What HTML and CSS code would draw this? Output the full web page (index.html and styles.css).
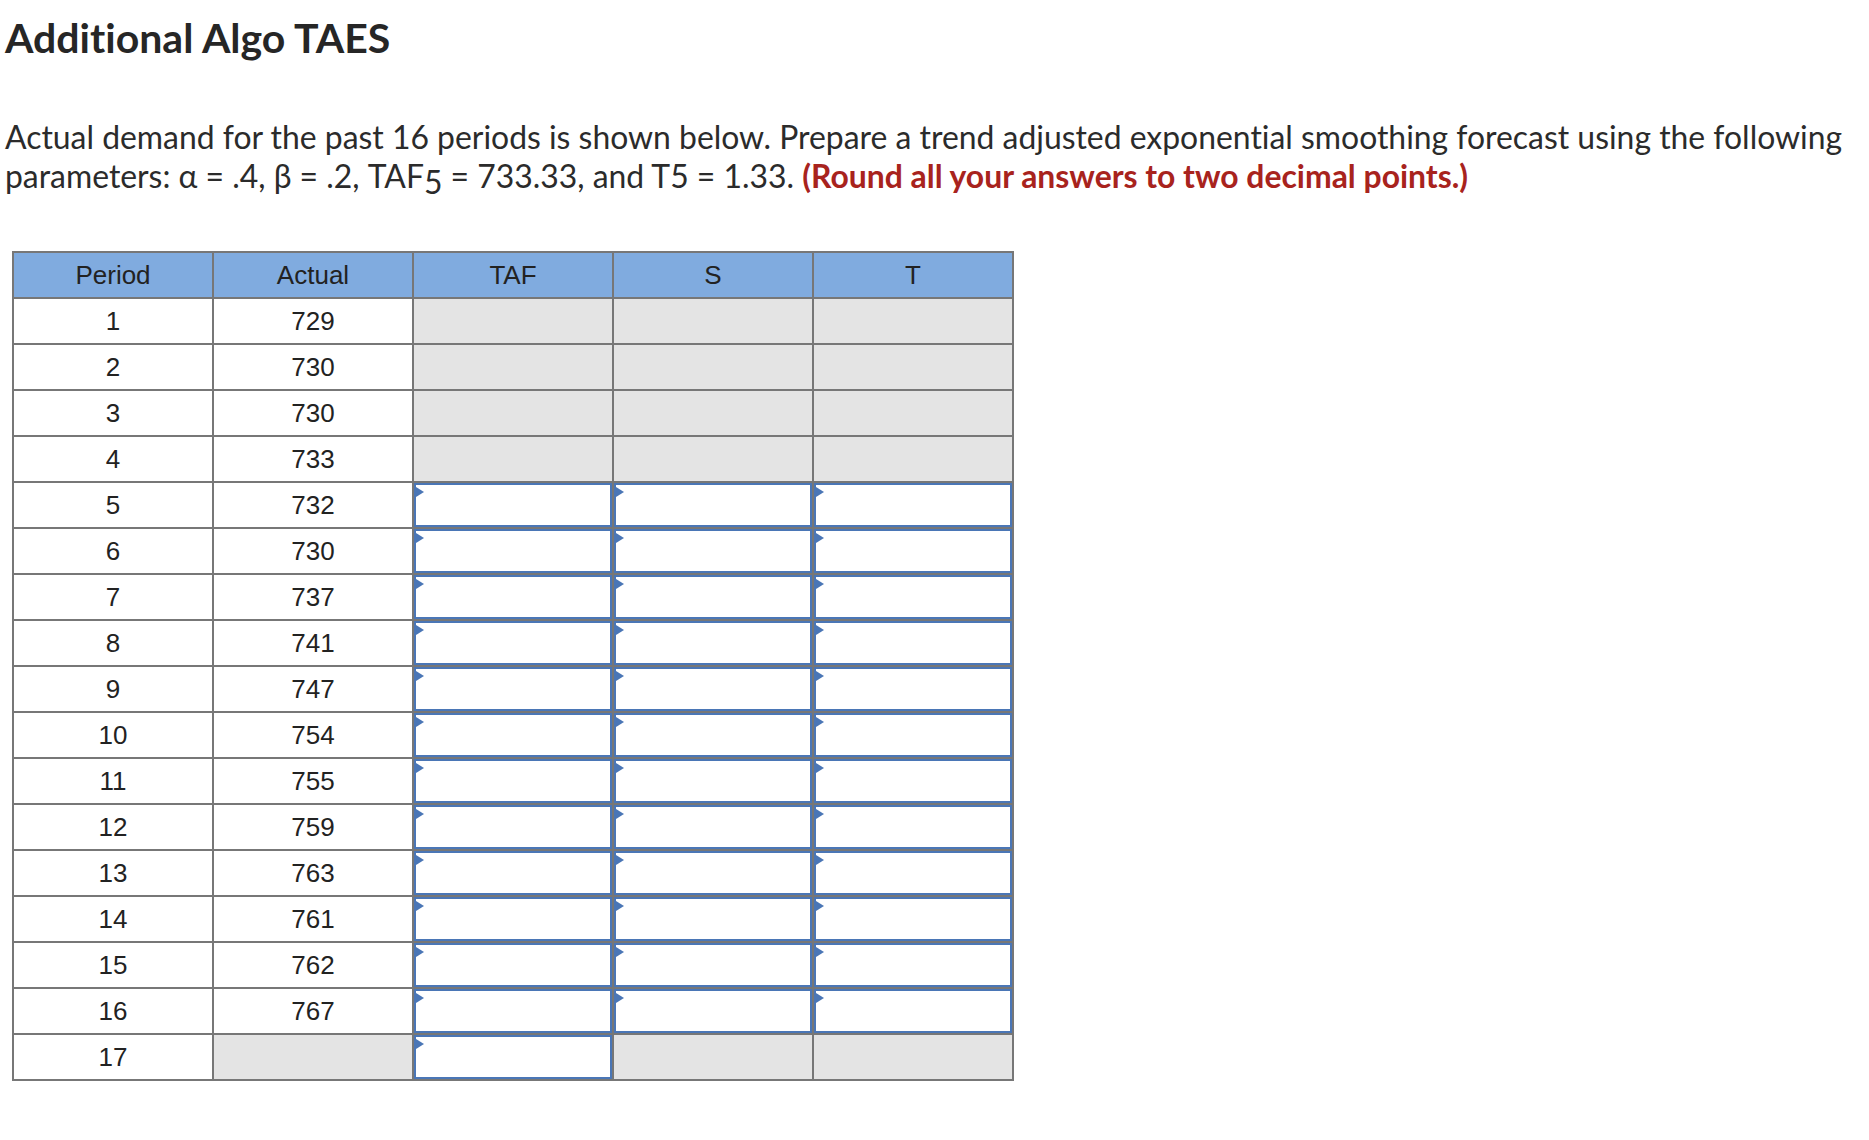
FILE: index.html
```html
<!DOCTYPE html>
<html lang="en">
<head>
<meta charset="utf-8">
<title>Additional Algo TAES</title>
<link rel="stylesheet" href="styles.css">
</head>
<body>
<main class="page">
  <h1 class="title">Additional Algo TAES</h1>
  <p class="intro">Actual demand for the past 16 periods is shown below. Prepare a trend adjusted exponential smoothing forecast using the following parameters: α = .4, β = .2, TAF<span class="sub">5</span> = 733.33, and T5 = 1.33. <strong class="note">(Round all your answers to two decimal points.)</strong></p>
  <table class="grid">
    <thead>
      <tr><th>Period</th><th>Actual</th><th>TAF</th><th>S</th><th>T</th></tr>
    </thead>
    <tbody>
      <tr><td>1</td><td>729</td><td class="off"></td><td class="off"></td><td class="off"></td></tr>
      <tr><td>2</td><td>730</td><td class="off"></td><td class="off"></td><td class="off"></td></tr>
      <tr><td>3</td><td>730</td><td class="off"></td><td class="off"></td><td class="off"></td></tr>
      <tr><td>4</td><td>733</td><td class="off"></td><td class="off"></td><td class="off"></td></tr>
      <tr><td>5</td><td>732</td><td class="in"><div class="box"></div></td><td class="in"><div class="box"></div></td><td class="in"><div class="box"></div></td></tr>
      <tr><td>6</td><td>730</td><td class="in"><div class="box"></div></td><td class="in"><div class="box"></div></td><td class="in"><div class="box"></div></td></tr>
      <tr><td>7</td><td>737</td><td class="in"><div class="box"></div></td><td class="in"><div class="box"></div></td><td class="in"><div class="box"></div></td></tr>
      <tr><td>8</td><td>741</td><td class="in"><div class="box"></div></td><td class="in"><div class="box"></div></td><td class="in"><div class="box"></div></td></tr>
      <tr><td>9</td><td>747</td><td class="in"><div class="box"></div></td><td class="in"><div class="box"></div></td><td class="in"><div class="box"></div></td></tr>
      <tr><td>10</td><td>754</td><td class="in"><div class="box"></div></td><td class="in"><div class="box"></div></td><td class="in"><div class="box"></div></td></tr>
      <tr><td>11</td><td>755</td><td class="in"><div class="box"></div></td><td class="in"><div class="box"></div></td><td class="in"><div class="box"></div></td></tr>
      <tr><td>12</td><td>759</td><td class="in"><div class="box"></div></td><td class="in"><div class="box"></div></td><td class="in"><div class="box"></div></td></tr>
      <tr><td>13</td><td>763</td><td class="in"><div class="box"></div></td><td class="in"><div class="box"></div></td><td class="in"><div class="box"></div></td></tr>
      <tr><td>14</td><td>761</td><td class="in"><div class="box"></div></td><td class="in"><div class="box"></div></td><td class="in"><div class="box"></div></td></tr>
      <tr><td>15</td><td>762</td><td class="in"><div class="box"></div></td><td class="in"><div class="box"></div></td><td class="in"><div class="box"></div></td></tr>
      <tr><td>16</td><td>767</td><td class="in"><div class="box"></div></td><td class="in"><div class="box"></div></td><td class="in"><div class="box"></div></td></tr>
      <tr><td>17</td><td class="off"></td><td class="in"><div class="box"></div></td><td class="off"></td><td class="off"></td></tr>
    </tbody>
  </table>
</main>
</body>
</html>
```

FILE: styles.css
```css
* { box-sizing: border-box; }

html, body {
  margin: 0;
  padding: 0;
  background: #ffffff;
}

.page {
  padding: 15px 0 0 5px;
  color: #2a2a2a;
  font-family: Lato, "Open Sans", sans-serif;
  font-variant-ligatures: none;
}

.title {
  margin: 0;
  font-size: 41px;
  line-height: 46px;
  font-weight: 700;
  color: #262626;
}

.intro {
  margin: 57px 0 0 0;
  font-size: 31.9px;
  line-height: 39px;
  font-weight: 400;
  color: #2b2b2b;
}

.sub {
  vertical-align: -0.2em;
  line-height: 0;
}

.note {
  color: #a8231d;
  font-weight: 700;
}

.grid {
  margin: 55px 0 0 7px;
  border-collapse: separate;
  border-spacing: 0;
  table-layout: fixed;
  width: 1002px;
  border-left: 2px solid #777777;
  border-top: 2px solid #777777;
  font-family: "Liberation Sans", Arial, sans-serif;
  font-size: 26px;
  color: #222222;
}

.grid th,
.grid td {
  width: 200px;
  height: 46px;
  padding: 0;
  border-right: 2px solid #777777;
  border-bottom: 2px solid #777777;
  text-align: center;
  vertical-align: middle;
  font-weight: 400;
  background: #ffffff;
}

.grid th {
  background: #80abdf;
}

.grid td.off {
  background: #e4e4e4;
}

.grid td.in {
  vertical-align: top;
}

.box {
  position: relative;
  height: 44px;
  border: 2px solid #4a76b6;
  background: #ffffff;
}

.box::before {
  content: "";
  position: absolute;
  top: 2px;
  left: 0;
  width: 0;
  height: 0;
  border-left: 8px solid #4a76b6;
  border-top: 5px solid transparent;
  border-bottom: 5px solid transparent;
}
```
